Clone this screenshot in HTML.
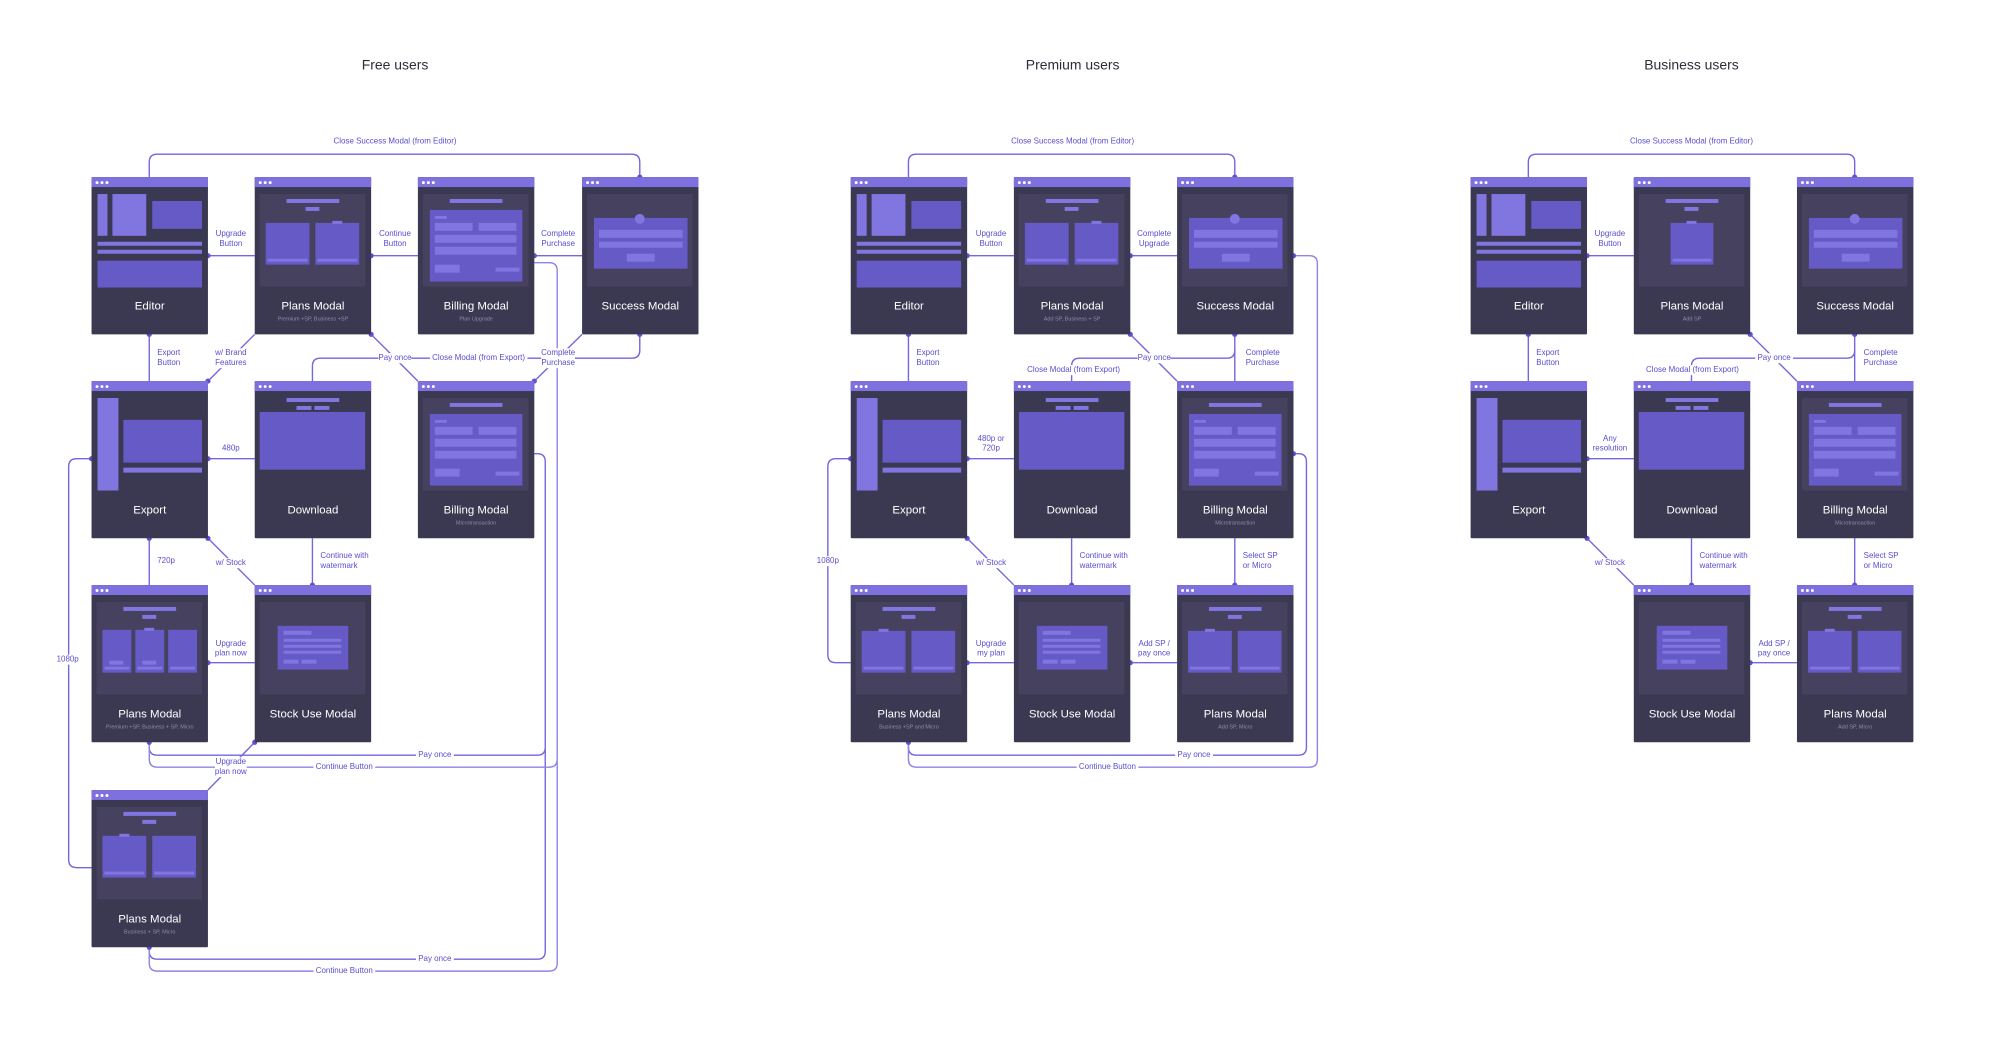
<!DOCTYPE html>
<html><head><meta charset="utf-8"><style>
body{margin:0;width:2000px;height:1040px;background:#fff;position:relative;overflow:hidden;font-family:"Liberation Sans",sans-serif}
#w{position:absolute;left:0;top:0;width:2000px;height:1040px;transform:scale(0.995);transform-origin:0 0}
.c{position:absolute;width:117px;height:158px;background:#3b3952;border-radius:1px}
.c:before{content:"";position:absolute;left:0;top:0;width:117px;height:10px;background:#7e71df}
.c:after{content:"";position:absolute;left:4px;top:3.5px;width:3px;height:3px;border-radius:50%;background:#fff;box-shadow:5px 0 #fff,10px 0 #fff}
.c i{position:absolute;display:block}
.p{background:#45415f}.b{background:#665ac6}.l{background:#8175e0}
.c b{position:absolute;left:0;width:117px;top:124px;text-align:center;color:#fff;font-weight:normal;font-size:11.5px}
.c s{position:absolute;left:0;width:117px;top:140px;text-align:center;color:#8f8ba8;font-size:5.5px;text-decoration:none}
.t,.tl{position:absolute;font-size:8px;line-height:10px;color:#5a4dd0;background:#fff;white-space:nowrap;text-align:center}
.t{transform:translate(-50%,-50%)}.tl{transform:translateY(-50%);text-align:left;background:transparent}
h1{position:absolute;top:57px;margin:0;font-size:14px;font-weight:normal;color:#2c2c3a;transform:translateX(-50%)}
svg{position:absolute;left:0;top:0}
</style></head><body><div id="w">
<h1 style="left:397px">Free users</h1>
<h1 style="left:1078px">Premium users</h1>
<h1 style="left:1700px">Business users</h1>

<svg width="2000" height="1040" fill="none" stroke="#7466dc" stroke-width="1.4">
<path d="M150 178V163Q150 155 158 155H635Q643 155 643 163V178"/>
<path d="M209 257H256M373 257H420M537 257H585M150 336V383M209 383L256 336M373 336L420 383M537 383L585 336"/>
<path d="M643 336V352Q643 360 635 360H322Q314 360 314 368V383"/>
<path d="M209 461H256M150 541V588M209 541L256 588M314 541V588M209 666H256M256 746L209 794"/>
<path d="M92 461H77Q69 461 69 469V864Q69 872 77 872H92"/>
<path d="M537 456H540Q548 456 548 464V956Q548 964 540 964H158Q150 964 150 956V952M548 751Q548 759 540 759H158Q150 759 150 751V746"/>
<path d="M537 264H552Q560 264 560 272V968Q560 976 552 976H158Q150 976 150 968V952M560 763Q560 771 552 771H158Q150 771 150 763V746" stroke="#8e83e6"/>
<path d="M913 178V163Q913 155 921 155H1233Q1241 155 1241 163V178"/>
<path d="M972 257H1019M1136 257H1183M913 336V383M1136 336L1183 383M1241 336V383M972 461H1019M972 541L1019 588M1077 541V588M1241 541V588M972 666H1019M1136 666H1183"/>
<path d="M1241 352Q1241 360 1233 360H1085Q1077 360 1077 368V383"/>
<path d="M855 461H840Q832 461 832 469V658Q832 666 840 666H855"/>
<path d="M1300 456H1305Q1313 456 1313 464V751Q1313 759 1305 759H921Q913 759 913 751V746"/>
<path d="M1300 257H1316Q1324 257 1324 265V763Q1324 771 1316 771H921Q913 771 913 763V746" stroke="#8e83e6"/>
<path d="M1536 178V163Q1536 155 1544 155H1856Q1864 155 1864 163V178"/>
<path d="M1595 257H1642M1536 336V383M1759 336L1806 383M1864 336V383M1595 461H1642M1595 541L1642 588M1700 541V588M1864 541V588M1759 666H1806"/>
<path d="M1864 352Q1864 360 1856 360H1708Q1700 360 1700 368V383"/>
<g fill="#5e50d2" stroke="none">
<circle cx="209" cy="257" r="2.6"/><circle cx="373" cy="257" r="2.6"/><circle cx="537" cy="257" r="2.6"/><circle cx="150" cy="336" r="2.6"/><circle cx="373" cy="336" r="2.6"/><circle cx="643" cy="336" r="2.6"/><circle cx="643" cy="178" r="2.6"/><circle cx="209" cy="383" r="2.6"/><circle cx="537" cy="383" r="2.6"/><circle cx="209" cy="461" r="2.6"/><circle cx="92" cy="461" r="2.6"/><circle cx="150" cy="541" r="2.6"/><circle cx="209" cy="541" r="2.6"/><circle cx="314" cy="588" r="2.6"/><circle cx="209" cy="666" r="2.6"/><circle cx="256" cy="746" r="2.6"/><circle cx="150" cy="746" r="2.6"/><circle cx="150" cy="952" r="2.6"/>
<circle cx="972" cy="257" r="2.6"/><circle cx="1136" cy="257" r="2.6"/><circle cx="1300" cy="257" r="2.6"/><circle cx="1241" cy="178" r="2.6"/><circle cx="913" cy="336" r="2.6"/><circle cx="1136" cy="336" r="2.6"/><circle cx="1241" cy="336" r="2.6"/><circle cx="972" cy="461" r="2.6"/><circle cx="855" cy="461" r="2.6"/><circle cx="972" cy="541" r="2.6"/><circle cx="1077" cy="588" r="2.6"/><circle cx="1241" cy="588" r="2.6"/><circle cx="972" cy="666" r="2.6"/><circle cx="1136" cy="666" r="2.6"/><circle cx="913" cy="746" r="2.6"/><circle cx="1300" cy="456" r="2.6"/>
<circle cx="1595" cy="257" r="2.6"/><circle cx="1864" cy="178" r="2.6"/><circle cx="1536" cy="336" r="2.6"/><circle cx="1759" cy="336" r="2.6"/><circle cx="1864" cy="336" r="2.6"/><circle cx="1595" cy="461" r="2.6"/><circle cx="1595" cy="541" r="2.6"/><circle cx="1700" cy="588" r="2.6"/><circle cx="1864" cy="588" r="2.6"/><circle cx="1759" cy="666" r="2.6"/>
</g>
</svg>

<div class="t" style="left:397px;top:142px">Close Success Modal (from Editor)</div>
<div class="t" style="left:232px;top:240px">Upgrade<br>Button</div>
<div class="t" style="left:397px;top:240px">Continue<br>Button</div>
<div class="t" style="left:561px;top:240px">Complete<br>Purchase</div>
<div class="tl" style="left:158px;top:360px">Export<br>Button</div>
<div class="t" style="left:232px;top:360px">w/ Brand<br>Features</div>
<div class="t" style="left:397px;top:360px">Pay once</div>
<div class="t" style="left:481px;top:360px">&nbsp;Close Modal (from Export)&nbsp;</div>
<div class="t" style="left:561px;top:360px">Complete<br>Purchase</div>
<div class="t" style="left:232px;top:451px">480p</div>
<div class="tl" style="left:158px;top:564px">720p</div>
<div class="t" style="left:232px;top:566px">w/ Stock</div>
<div class="tl" style="left:322px;top:564px">Continue with<br>watermark</div>
<div class="t" style="left:232px;top:652px">Upgrade<br>plan now</div>
<div class="t" style="left:68px;top:663px">1080p</div>
<div class="t" style="left:232px;top:771px">Upgrade<br>plan now</div>
<div class="t" style="left:437px;top:759px">&nbsp;Pay once&nbsp;</div>
<div class="t" style="left:346px;top:771px">&nbsp;Continue Button&nbsp;</div>
<div class="t" style="left:437px;top:964px">&nbsp;Pay once&nbsp;</div>
<div class="t" style="left:346px;top:976px">&nbsp;Continue Button&nbsp;</div>
<div class="t" style="left:1078px;top:142px">Close Success Modal (from Editor)</div>
<div class="t" style="left:996px;top:240px">Upgrade<br>Button</div>
<div class="t" style="left:1160px;top:240px">Complete<br>Upgrade</div>
<div class="tl" style="left:921px;top:360px">Export<br>Button</div>
<div class="t" style="left:1160px;top:360px">Pay once</div>
<div class="t" style="left:1079px;top:372px">Close Modal (from Export)</div>
<div class="tl" style="left:1252px;top:360px">Complete<br>Purchase</div>
<div class="t" style="left:996px;top:446px">480p or<br>720p</div>
<div class="t" style="left:996px;top:566px">w/ Stock</div>
<div class="tl" style="left:1085px;top:564px">Continue with<br>watermark</div>
<div class="tl" style="left:1249px;top:564px">Select SP<br>or Micro</div>
<div class="t" style="left:996px;top:652px">Upgrade<br>my plan</div>
<div class="t" style="left:1160px;top:652px">Add SP /<br>pay once</div>
<div class="t" style="left:832px;top:564px">1080p</div>
<div class="t" style="left:1200px;top:759px">&nbsp;Pay once&nbsp;</div>
<div class="t" style="left:1113px;top:771px">&nbsp;Continue Button&nbsp;</div>
<div class="t" style="left:1700px;top:142px">Close Success Modal (from Editor)</div>
<div class="t" style="left:1618px;top:240px">Upgrade<br>Button</div>
<div class="tl" style="left:1544px;top:360px">Export<br>Button</div>
<div class="t" style="left:1783px;top:360px">&nbsp;Pay once&nbsp;</div>
<div class="t" style="left:1701px;top:372px">Close Modal (from Export)</div>
<div class="tl" style="left:1873px;top:360px">Complete<br>Purchase</div>
<div class="t" style="left:1618px;top:446px">Any<br>resolution</div>
<div class="t" style="left:1618px;top:566px">w/ Stock</div>
<div class="tl" style="left:1708px;top:564px">Continue with<br>watermark</div>
<div class="tl" style="left:1873px;top:564px">Select SP<br>or Micro</div>
<div class="t" style="left:1783px;top:652px">Add SP /<br>pay once</div>

<div class="c" style="left:92px;top:178px"><i class="l" style="left:6px;top:17px;width:10px;height:42px"></i><i class="l" style="left:21px;top:17px;width:34px;height:42px"></i><i class="b" style="left:61px;top:24px;width:50px;height:28px"></i><i class="l" style="left:6px;top:65px;width:105px;height:4px"></i><i class="l" style="left:6px;top:73px;width:105px;height:4px"></i><i class="b" style="left:6px;top:84px;width:105px;height:27px"></i><b>Editor</b></div>
<div class="c" style="left:256px;top:178px"><i class="p" style="left:5px;top:17px;width:106px;height:93px"></i><i class="l" style="left:32px;top:22px;width:53px;height:4px"></i><i class="l" style="left:51px;top:30px;width:14px;height:4px"></i><i class="b" style="left:11px;top:46px;width:44px;height:42px"></i><i class="b" style="left:61px;top:46px;width:44px;height:42px"></i><i class="l" style="left:78px;top:44px;width:10px;height:3px"></i><i class="l" style="left:13px;top:82px;width:40px;height:3px"></i><i class="l" style="left:63px;top:82px;width:40px;height:3px"></i><b>Plans Modal</b><s>Premium +SP, Business +SP</s></div>
<div class="c" style="left:420px;top:178px"><i class="p" style="left:5px;top:17px;width:106px;height:93px"></i><i class="l" style="left:32px;top:22px;width:53px;height:4px"></i><i class="b" style="left:12px;top:33px;width:93px;height:72px"></i><i class="l" style="left:17px;top:39px;width:12px;height:3px"></i><i class="l" style="left:17px;top:46px;width:38px;height:8px"></i><i class="l" style="left:61px;top:46px;width:38px;height:8px"></i><i class="l" style="left:17px;top:58px;width:82px;height:8px"></i><i class="l" style="left:17px;top:70px;width:82px;height:8px"></i><i class="l" style="left:17px;top:88px;width:25px;height:8px"></i><i class="l" style="left:78px;top:91px;width:24px;height:4px"></i><b>Billing Modal</b><s>Plan Upgrade</s></div>
<div class="c" style="left:585px;top:178px"><i class="p" style="left:5px;top:17px;width:106px;height:93px"></i><i class="b" style="left:12px;top:41px;width:94px;height:51px"></i><i class="l" style="left:53px;top:37px;width:10px;height:10px;border-radius:50%"></i><i class="l" style="left:17px;top:53px;width:84px;height:8px"></i><i class="l" style="left:17px;top:65px;width:84px;height:6px"></i><i class="l" style="left:45px;top:77px;width:28px;height:8px"></i><b>Success Modal</b></div>

<div class="c" style="left:92px;top:383px"><i class="l" style="left:6px;top:17px;width:21px;height:93px"></i><i class="b" style="left:32px;top:39px;width:79px;height:43px"></i><i class="l" style="left:32px;top:87px;width:79px;height:5px"></i><b>Export</b></div>
<div class="c" style="left:256px;top:383px"><i class="l" style="left:32px;top:17px;width:53px;height:4px"></i><i class="l" style="left:42px;top:25px;width:15px;height:4px"></i><i class="l" style="left:60px;top:25px;width:15px;height:4px"></i><i class="b" style="left:5px;top:31px;width:106px;height:58px"></i><b>Download</b></div>
<div class="c" style="left:420px;top:383px"><i class="p" style="left:5px;top:17px;width:106px;height:93px"></i><i class="l" style="left:32px;top:22px;width:53px;height:4px"></i><i class="b" style="left:12px;top:33px;width:93px;height:72px"></i><i class="l" style="left:17px;top:39px;width:12px;height:3px"></i><i class="l" style="left:17px;top:46px;width:38px;height:8px"></i><i class="l" style="left:61px;top:46px;width:38px;height:8px"></i><i class="l" style="left:17px;top:58px;width:82px;height:8px"></i><i class="l" style="left:17px;top:70px;width:82px;height:8px"></i><i class="l" style="left:17px;top:88px;width:25px;height:8px"></i><i class="l" style="left:78px;top:91px;width:24px;height:4px"></i><b>Billing Modal</b><s>Microtransaction</s></div>

<div class="c" style="left:92px;top:588px"><i class="p" style="left:5px;top:17px;width:106px;height:93px"></i><i class="l" style="left:32px;top:22px;width:53px;height:4px"></i><i class="l" style="left:51px;top:30px;width:14px;height:4px"></i><i class="b" style="left:11px;top:45px;width:29px;height:43px"></i><i class="b" style="left:44px;top:45px;width:29px;height:43px"></i><i class="b" style="left:77px;top:45px;width:29px;height:43px"></i><i class="l" style="left:53px;top:43px;width:10px;height:3px"></i><i class="l" style="left:18px;top:76px;width:14px;height:4px"></i><i class="l" style="left:51px;top:76px;width:14px;height:4px"></i><i class="l" style="left:13px;top:82px;width:25px;height:3px"></i><i class="l" style="left:46px;top:82px;width:25px;height:3px"></i><i class="l" style="left:79px;top:82px;width:25px;height:3px"></i><b>Plans Modal</b><s>Premium +SP, Business + SP, Micro</s></div>
<div class="c" style="left:256px;top:588px"><i class="p" style="left:5px;top:17px;width:106px;height:93px"></i><i class="b" style="left:23px;top:41px;width:71px;height:44px"></i><i class="l" style="left:29px;top:46px;width:28px;height:4px"></i><i class="l" style="left:29px;top:54px;width:58px;height:3px"></i><i class="l" style="left:29px;top:60px;width:58px;height:3px"></i><i class="l" style="left:29px;top:66px;width:58px;height:3px"></i><i class="l" style="left:29px;top:75px;width:15px;height:4px"></i><i class="l" style="left:47px;top:75px;width:15px;height:4px"></i><b>Stock Use Modal</b></div>

<div class="c" style="left:92px;top:794px"><i class="p" style="left:5px;top:17px;width:106px;height:93px"></i><i class="l" style="left:32px;top:22px;width:53px;height:4px"></i><i class="l" style="left:51px;top:30px;width:14px;height:4px"></i><i class="b" style="left:11px;top:46px;width:44px;height:42px"></i><i class="b" style="left:61px;top:46px;width:44px;height:42px"></i><i class="l" style="left:28px;top:44px;width:10px;height:3px"></i><i class="l" style="left:13px;top:82px;width:40px;height:3px"></i><i class="l" style="left:63px;top:82px;width:40px;height:3px"></i><b>Plans Modal</b><s>Business + SP, Micro</s></div>

<div class="c" style="left:855px;top:178px"><i class="l" style="left:6px;top:17px;width:10px;height:42px"></i><i class="l" style="left:21px;top:17px;width:34px;height:42px"></i><i class="b" style="left:61px;top:24px;width:50px;height:28px"></i><i class="l" style="left:6px;top:65px;width:105px;height:4px"></i><i class="l" style="left:6px;top:73px;width:105px;height:4px"></i><i class="b" style="left:6px;top:84px;width:105px;height:27px"></i><b>Editor</b></div>
<div class="c" style="left:1019px;top:178px"><i class="p" style="left:5px;top:17px;width:106px;height:93px"></i><i class="l" style="left:32px;top:22px;width:53px;height:4px"></i><i class="l" style="left:51px;top:30px;width:14px;height:4px"></i><i class="b" style="left:11px;top:46px;width:44px;height:42px"></i><i class="b" style="left:61px;top:46px;width:44px;height:42px"></i><i class="l" style="left:78px;top:44px;width:10px;height:3px"></i><i class="l" style="left:13px;top:82px;width:40px;height:3px"></i><i class="l" style="left:63px;top:82px;width:40px;height:3px"></i><b>Plans Modal</b><s>Add SP, Business + SP</s></div>
<div class="c" style="left:1183px;top:178px"><i class="p" style="left:5px;top:17px;width:106px;height:93px"></i><i class="b" style="left:12px;top:41px;width:94px;height:51px"></i><i class="l" style="left:53px;top:37px;width:10px;height:10px;border-radius:50%"></i><i class="l" style="left:17px;top:53px;width:84px;height:8px"></i><i class="l" style="left:17px;top:65px;width:84px;height:6px"></i><i class="l" style="left:45px;top:77px;width:28px;height:8px"></i><b>Success Modal</b></div>

<div class="c" style="left:855px;top:383px"><i class="l" style="left:6px;top:17px;width:21px;height:93px"></i><i class="b" style="left:32px;top:39px;width:79px;height:43px"></i><i class="l" style="left:32px;top:87px;width:79px;height:5px"></i><b>Export</b></div>
<div class="c" style="left:1019px;top:383px"><i class="l" style="left:32px;top:17px;width:53px;height:4px"></i><i class="l" style="left:42px;top:25px;width:15px;height:4px"></i><i class="l" style="left:60px;top:25px;width:15px;height:4px"></i><i class="b" style="left:5px;top:31px;width:106px;height:58px"></i><b>Download</b></div>
<div class="c" style="left:1183px;top:383px"><i class="p" style="left:5px;top:17px;width:106px;height:93px"></i><i class="l" style="left:32px;top:22px;width:53px;height:4px"></i><i class="b" style="left:12px;top:33px;width:93px;height:72px"></i><i class="l" style="left:17px;top:39px;width:12px;height:3px"></i><i class="l" style="left:17px;top:46px;width:38px;height:8px"></i><i class="l" style="left:61px;top:46px;width:38px;height:8px"></i><i class="l" style="left:17px;top:58px;width:82px;height:8px"></i><i class="l" style="left:17px;top:70px;width:82px;height:8px"></i><i class="l" style="left:17px;top:88px;width:25px;height:8px"></i><i class="l" style="left:78px;top:91px;width:24px;height:4px"></i><b>Billing Modal</b><s>Microtransaction</s></div>

<div class="c" style="left:855px;top:588px"><i class="p" style="left:5px;top:17px;width:106px;height:93px"></i><i class="l" style="left:32px;top:22px;width:53px;height:4px"></i><i class="l" style="left:51px;top:30px;width:14px;height:4px"></i><i class="b" style="left:11px;top:46px;width:44px;height:42px"></i><i class="b" style="left:61px;top:46px;width:44px;height:42px"></i><i class="l" style="left:28px;top:44px;width:10px;height:3px"></i><i class="l" style="left:13px;top:82px;width:40px;height:3px"></i><i class="l" style="left:63px;top:82px;width:40px;height:3px"></i><b>Plans Modal</b><s>Business +SP and Micro</s></div>
<div class="c" style="left:1019px;top:588px"><i class="p" style="left:5px;top:17px;width:106px;height:93px"></i><i class="b" style="left:23px;top:41px;width:71px;height:44px"></i><i class="l" style="left:29px;top:46px;width:28px;height:4px"></i><i class="l" style="left:29px;top:54px;width:58px;height:3px"></i><i class="l" style="left:29px;top:60px;width:58px;height:3px"></i><i class="l" style="left:29px;top:66px;width:58px;height:3px"></i><i class="l" style="left:29px;top:75px;width:15px;height:4px"></i><i class="l" style="left:47px;top:75px;width:15px;height:4px"></i><b>Stock Use Modal</b></div>
<div class="c" style="left:1183px;top:588px"><i class="p" style="left:5px;top:17px;width:106px;height:93px"></i><i class="l" style="left:32px;top:22px;width:53px;height:4px"></i><i class="l" style="left:51px;top:30px;width:14px;height:4px"></i><i class="b" style="left:11px;top:46px;width:44px;height:42px"></i><i class="b" style="left:61px;top:46px;width:44px;height:42px"></i><i class="l" style="left:28px;top:44px;width:10px;height:3px"></i><i class="l" style="left:13px;top:82px;width:40px;height:3px"></i><i class="l" style="left:63px;top:82px;width:40px;height:3px"></i><b>Plans Modal</b><s>Add SP, Micro</s></div>

<div class="c" style="left:1478px;top:178px"><i class="l" style="left:6px;top:17px;width:10px;height:42px"></i><i class="l" style="left:21px;top:17px;width:34px;height:42px"></i><i class="b" style="left:61px;top:24px;width:50px;height:28px"></i><i class="l" style="left:6px;top:65px;width:105px;height:4px"></i><i class="l" style="left:6px;top:73px;width:105px;height:4px"></i><i class="b" style="left:6px;top:84px;width:105px;height:27px"></i><b>Editor</b></div>
<div class="c" style="left:1642px;top:178px"><i class="p" style="left:5px;top:17px;width:106px;height:93px"></i><i class="l" style="left:32px;top:22px;width:53px;height:4px"></i><i class="l" style="left:51px;top:30px;width:14px;height:4px"></i><i class="b" style="left:37px;top:46px;width:43px;height:42px"></i><i class="l" style="left:53px;top:44px;width:10px;height:3px"></i><i class="l" style="left:39px;top:82px;width:39px;height:3px"></i><b>Plans Modal</b><s>Add SP</s></div>
<div class="c" style="left:1806px;top:178px"><i class="p" style="left:5px;top:17px;width:106px;height:93px"></i><i class="b" style="left:12px;top:41px;width:94px;height:51px"></i><i class="l" style="left:53px;top:37px;width:10px;height:10px;border-radius:50%"></i><i class="l" style="left:17px;top:53px;width:84px;height:8px"></i><i class="l" style="left:17px;top:65px;width:84px;height:6px"></i><i class="l" style="left:45px;top:77px;width:28px;height:8px"></i><b>Success Modal</b></div>

<div class="c" style="left:1478px;top:383px"><i class="l" style="left:6px;top:17px;width:21px;height:93px"></i><i class="b" style="left:32px;top:39px;width:79px;height:43px"></i><i class="l" style="left:32px;top:87px;width:79px;height:5px"></i><b>Export</b></div>
<div class="c" style="left:1642px;top:383px"><i class="l" style="left:32px;top:17px;width:53px;height:4px"></i><i class="l" style="left:42px;top:25px;width:15px;height:4px"></i><i class="l" style="left:60px;top:25px;width:15px;height:4px"></i><i class="b" style="left:5px;top:31px;width:106px;height:58px"></i><b>Download</b></div>
<div class="c" style="left:1806px;top:383px"><i class="p" style="left:5px;top:17px;width:106px;height:93px"></i><i class="l" style="left:32px;top:22px;width:53px;height:4px"></i><i class="b" style="left:12px;top:33px;width:93px;height:72px"></i><i class="l" style="left:17px;top:39px;width:12px;height:3px"></i><i class="l" style="left:17px;top:46px;width:38px;height:8px"></i><i class="l" style="left:61px;top:46px;width:38px;height:8px"></i><i class="l" style="left:17px;top:58px;width:82px;height:8px"></i><i class="l" style="left:17px;top:70px;width:82px;height:8px"></i><i class="l" style="left:17px;top:88px;width:25px;height:8px"></i><i class="l" style="left:78px;top:91px;width:24px;height:4px"></i><b>Billing Modal</b><s>Microtransaction</s></div>

<div class="c" style="left:1642px;top:588px"><i class="p" style="left:5px;top:17px;width:106px;height:93px"></i><i class="b" style="left:23px;top:41px;width:71px;height:44px"></i><i class="l" style="left:29px;top:46px;width:28px;height:4px"></i><i class="l" style="left:29px;top:54px;width:58px;height:3px"></i><i class="l" style="left:29px;top:60px;width:58px;height:3px"></i><i class="l" style="left:29px;top:66px;width:58px;height:3px"></i><i class="l" style="left:29px;top:75px;width:15px;height:4px"></i><i class="l" style="left:47px;top:75px;width:15px;height:4px"></i><b>Stock Use Modal</b></div>
<div class="c" style="left:1806px;top:588px"><i class="p" style="left:5px;top:17px;width:106px;height:93px"></i><i class="l" style="left:32px;top:22px;width:53px;height:4px"></i><i class="l" style="left:51px;top:30px;width:14px;height:4px"></i><i class="b" style="left:11px;top:46px;width:44px;height:42px"></i><i class="b" style="left:61px;top:46px;width:44px;height:42px"></i><i class="l" style="left:28px;top:44px;width:10px;height:3px"></i><i class="l" style="left:13px;top:82px;width:40px;height:3px"></i><i class="l" style="left:63px;top:82px;width:40px;height:3px"></i><b>Plans Modal</b><s>Add SP, Micro</s></div>
</div></body></html>
